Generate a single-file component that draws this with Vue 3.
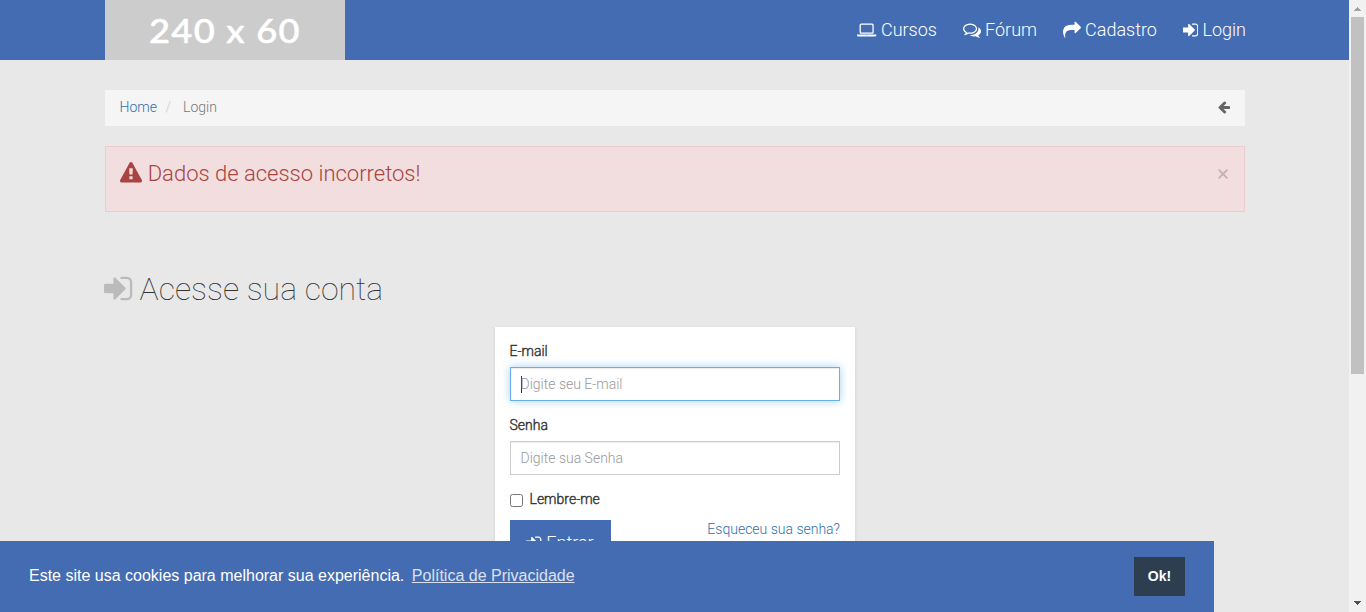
<script setup>
const icons = {
  laptop: { box: '0 0 1920 1792', d: 'M416 1280q-66 0-113-47t-47-113v-704q0-66 47-113t113-47h1088q66 0 113 47t47 113v704q0 66-47 113t-113 47h-1088zm-32-864v704q0 13 9.5 22.5t22.5 9.5h1088q13 0 22.5-9.5t9.5-22.5v-704q0-13-9.5-22.5t-22.5-9.5h-1088q-13 0-22.5 9.5t-9.5 22.5zm1376 928h160v96q0 40-47 68t-113 28h-1600q-66 0-113-28t-47-68v-96h1760zm-720 96q16 0 16-16t-16-16h-160q-16 0-16 16t16 16h160z' },
  comments: { box: '0 0 1792 1792', d: 'M704 384q-153 0-286 52t-211.5 141-78.5 191q0 82 53 158t149 132l97 56-35 84q34-20 62-39l44-31 53 10q78 14 153 14 153 0 286-52t211.5-141 78.5-191-78.5-191-211.5-141-286-52zm0-128q191 0 353.5 68.5t256.5 186.5 94 257-94 257-256.5 186.5-353.5 68.5q-86 0-176-16-124 88-278 128-36 9-86 16h-3q-11 0-20.5-8t-11.5-21q-1-3-1-6.5t.5-6.5 2-6l2.5-5 3.5-5.5 4-5 4.5-5 4-4.5q5-6 23-25t26-29.5 22.5-29 25-38.5 20.5-44q-124-72-195-177t-71-224q0-139 94-257t256.5-186.5 353.5-68.5zm822 1169q10 24 20.5 44t25 38.5 22.5 29 26 29.5 23 25q1 1 4 4.5t4.5 5 4 5 3.5 5.5l2.5 5 2 6 .5 6.5-1 6.5q-3 14-13 22t-22 7q-50-7-86-16-154-40-278-128-90 16-176 16-271 0-472-132 58 4 88 4 161 0 309-45t264-129q125-92 192-212t67-254q0-77-23-152 129 71 204 178t75 230q0 120-71 224.5t-195 176.5z' },
  share: { box: '0 0 1792 1792', d: 'M1792 640q0 26-19 45l-512 512q-19 19-45 19t-45-19-19-45v-256h-224q-98 0-175.5 6t-154 21.5-133 42.5-105.5 69.5-80 101-48.5 138.5-17.5 181q0 55 5 123 0 6 2.5 23.5t2.5 26.5q0 15-8.5 25t-23.5 10q-16 0-28-17-7-9-13-22t-13.5-30-10.5-24q-127-285-127-451 0-199 53-333 162-403 875-403h224v-256q0-26 19-45t45-19 45 19l512 512q19 19 19 45z' },
  signIn: { box: '128 0 1536 1792', d: 'M1312 896q0 26-19 45l-544 544q-19 19-45 19t-45-19-19-45v-288h-448q-26 0-45-19t-19-45v-384q0-26 19-45t45-19h448v-288q0-26 19-45t45-19 45 19l544 544q19 19 19 45zm352-352v704q0 119-84.5 203.5t-203.5 84.5h-320q-13 0-22.5-9.5t-9.5-22.5q0-4-1-20t-.5-26.5 3-23.5 10-19.5 20.5-6.5h320q66 0 113-47t47-113v-704q0-66-47-113t-113-47h-312l-11.5-1-11.5-3-8-5.5-7-9-2-13.5q0-4-1-20t-.5-26.5 3-23.5 10-19.5 20.5-6.5h320q119 0 203.5 84.5t84.5 203.5z' },
  warning: { box: '0 0 1792 1792', d: 'M1024 1375v-190q0-14-9.5-23.5t-22.5-9.5h-192q-13 0-22.5 9.5t-9.5 23.5v190q0 14 9.5 23.5t22.5 9.5h192q13 0 22.5-9.5t9.5-23.5zm-2-374l18-459q0-12-10-19-13-11-24-11h-220q-11 0-24 11-10 7-10 21l17 457q0 10 10 16.5t24 6.5h185q14 0 23.5-6.5t10.5-16.5zm-14-934l768 1408q35 63-2 126-17 29-46.5 46t-63.5 17h-1536q-34 0-63.5-17t-46.5-46q-37-63-2-126l768-1408q17-31 47-49t65-18 65 18 47 49z' },
  back: { box: '128 0 1536 1792', d: 'M1664 896v128q0 53-32.5 90.5t-84.5 37.5h-704l293 294q38 36 38 90t-38 90l-75 76q-37 37-90 37-52 0-91-37l-651-652q-37-37-37-90 0-52 37-91l651-650q38-38 91-38 52 0 90 38l75 74q38 38 38 91t-38 91l-293 293h704q52 0 84.5 37.5t32.5 90.5z' }
}
const nav = [
  { label: 'Cursos', icon: icons.laptop },
  { label: 'Fórum', icon: icons.comments },
  { label: 'Cadastro', icon: icons.share },
  { label: 'Login', icon: icons.signIn }
]
</script>

<template>
  <div class="window">
    <div class="page">
      <header class="topbar">
        <div class="container bar">
          <div class="logo"><span>240 x 60</span></div>
          <nav class="nav">
            <a v-for="n in nav" :key="n.label">
              <svg class="icon" :viewBox="n.icon.box"><path :d="n.icon.d" /></svg>
              <span>{{ n.label }}</span>
            </a>
          </nav>
        </div>
      </header>

      <main class="container">
        <div class="breadcrumb">
          <a class="link">Home</a><span class="slash">/</span><span class="current">Login</span>
          <svg class="icon back" :viewBox="icons.back.box"><path :d="icons.back.d" /></svg>
        </div>

        <div class="alert">
          <svg class="icon" :viewBox="icons.warning.box"><path :d="icons.warning.d" /></svg>
          <span class="message">Dados de acesso incorretos!</span>
          <svg class="close" viewBox="0 0 10 10"><path d="M.7.7 9.3 9.3M9.3.7.7 9.3" /></svg>
        </div>

        <h1>
          <svg class="icon" :viewBox="icons.signIn.box"><path :d="icons.signIn.d" /></svg>
          <span>Acesse sua conta</span>
        </h1>

        <form class="card">
          <label>E-mail</label>
          <div class="field focused"><i class="caret"></i><span>Digite seu E-mail</span></div>
          <label>Senha</label>
          <div class="field"><span>Digite sua Senha</span></div>
          <div class="remember"><i class="check"></i><label>Lembre-me</label></div>
          <div class="actions">
            <div class="submit">
              <svg class="icon" :viewBox="icons.signIn.box"><path :d="icons.signIn.d" /></svg>
              <span>Entrar</span>
            </div>
            <a class="link">Esqueceu sua senha?</a>
          </div>
        </form>
      </main>
    </div>

    <aside class="scrollbar">
      <svg class="up" viewBox="0 0 7 4"><path d="M3 0h1v1h1v1h1v1h1v1H0V3h1V2h1V1h1z" /></svg>
      <div class="thumb"></div>
      <svg class="down" viewBox="0 0 7 4"><path d="M0 0h7v1H6v1H5v1H4v1H3V3H2V2H1V1H0z" /></svg>
    </aside>

    <div class="cookies">
      <span>Este site usa cookies para melhorar sua experiência.</span>
      <a>Política de Privacidade</a>
      <div class="ok">Ok!</div>
    </div>
  </div>
</template>

<style>
body { margin: 0; overflow: hidden; }
</style>

<style scoped>
* { box-sizing: border-box; }
.window { position: relative; display: flex; width: 1366px; height: 612px; overflow: hidden; background: #e8e8e8; font: 300 14px/20px Roboto, sans-serif; color: #333; }
.page { width: 1349px; }
.container { width: 1140px; margin: 0 auto; }
.icon { height: 1em; flex: none; fill: currentColor; display: block; }
.topbar { height: 60px; background: #446cb3; }
.bar { display: flex; justify-content: space-between; }
.logo { width: 240px; height: 60px; background: #ccc; color: #fff; font: 500 33px/60px Lato, sans-serif; text-align: center; white-space: nowrap; -webkit-text-stroke: .5px #fff; stroke-linejoin: round; }
.logo span { display: inline-block; letter-spacing: 1.1px; transform: scaleX(1.1); }
.nav { display: flex; gap: 26px; align-items: center; height: 60px; font-size: 18px; color: #fff; margin-right: -1.5px; }
.nav a { display: flex; gap: 4.4px; align-items: center; }
.nav a + a { margin-left: -.3px; }
.link { color: #2f6fab; }
.breadcrumb { display: flex; align-items: center; height: 36px; margin-top: 30px; padding: 0 15px; background: #f5f5f5; }
.breadcrumb > a, .breadcrumb > span { position: relative; top: -1px; }
.slash { color: #ccc; margin: 0 12px 0 8.5px; }
.current { color: #777; }
.back { margin: -2px 0 0 auto; color: #666; }
.alert { display: flex; align-items: flex-start; height: 66px; margin-top: 20px; padding: 15px; border: 1px solid #ebccd1; background: #f2dede; color: #a94442; font-size: 22px; line-height: 24px; }
.alert .icon { margin-left: -.3px; }
.message { margin-left: 5.5px; }
.close { width: 10px; height: 10px; margin: 7px 1px 0 auto; fill: none; stroke: #c2b2b2; stroke-width: 1.8; }
h1 { display: flex; align-items: center; gap: 7px; height: 36px; margin: 59px 0 20px -.2px; font-size: 32px; font-weight: 100; line-height: 36px; }
h1 .icon { color: #bbb; height: 33px; margin-top: -1px; }
.card { width: 360px; height: 290px; margin: 0 auto; padding: 14px 15px 15px; background: #fff; box-shadow: 0 1px 3px rgba(0,0,0,.12); }
label { display: block; height: 20px; margin-bottom: 6px; -webkit-text-stroke: .4px #333; }
.field { display: flex; align-items: center; height: 34px; margin-bottom: 14px; padding: 0 10px; border: 1px solid #ccc; box-shadow: inset 0 1px 1px rgba(0,0,0,.075); color: #999; }
.focused { border-color: #66afe9; box-shadow: inset 0 1px 1px rgba(0,0,0,.075), 0 0 8px rgba(102,175,233,.6); }
.caret { width: 1px; height: 17px; margin-right: -1px; background: #333; }
.remember { display: flex; gap: 7px; height: 30px; }
.check { width: 13px; height: 13px; margin-top: 5px; border: 1px solid #767676; border-radius: 2.5px; background: #fff; }
.actions { display: flex; justify-content: space-between; }
.actions .link { margin-right: -.5px; }
.submit { display: flex; align-items: center; justify-content: center; gap: 4.5px; width: 101px; height: 46px; margin-top: 1px; background: #446cb3; color: #fff; font-size: 18px; }
.scrollbar { display: flex; flex-direction: column; align-items: center; width: 17px; background: #f1f1f1; }
.up, .down { width: 7px; height: 4px; fill: #a3a3a3; shape-rendering: crispEdges; }
.up { margin-top: 7px; }
.thumb { width: 13px; height: 357px; margin-top: 6px; background: #c1c1c1; }
.down { margin: auto 0 7px; fill: #505050; }
.cookies { position: absolute; left: 0; bottom: 0; display: flex; align-items: center; width: 1214px; height: 71px; padding: 0 29px; background: #446cb3; color: #fff; font: 400 16px/24px "Liberation Sans", Arial, sans-serif; }
.cookies span, .cookies a { margin-top: -2px; }
.cookies a { margin-left: 7.5px; opacity: .8; text-decoration: underline; }
.ok { width: 51px; height: 39px; margin-left: auto; background: #2c3e50; font-size: 14px; font-weight: 700; line-height: 39px; text-align: center; }
</style>
